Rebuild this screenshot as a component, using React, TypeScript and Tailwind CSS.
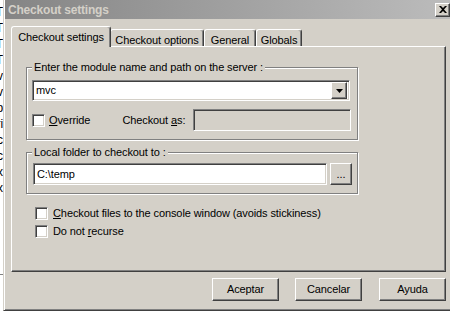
import React from "react";

const font = { fontFamily: '"Liberation Sans", Arial, sans-serif' };

// classic 3D bevels
const raised =
  "border-t border-l border-white border-r border-b border-r-[#404040] border-b-[#404040] shadow-[inset_-1px_-1px_0_#808080]";
const sunken =
  "border-t border-l border-[#808080] border-r border-b border-r-white border-b-white shadow-[inset_1px_1px_0_#404040,inset_-1px_-1px_0_#d4d0c8]";

function U({ children }: { children: React.ReactNode }) {
  return <span className="underline underline-offset-[1px]">{children}</span>;
}

function CheckBox() {
  return <div className={`w-[13px] h-[13px] bg-white shrink-0 ${sunken}`} />;
}

function Group({ label, className, children }: { label: string; className: string; children: React.ReactNode }) {
  return (
    <div
      className={`relative w-[332px] border border-[#808080] shadow-[1px_1px_0_white,inset_1px_1px_0_white] ${className}`}
    >
      <span className="absolute -top-[8px] left-[5px] bg-[#d4d0c8] px-[2px] leading-[14px]">{label}</span>
      {children}
    </div>
  );
}

function Tab({ label, active, w }: { label: string; active?: boolean; w: string }) {
  return (
    <div
      className={`${w} flex justify-center items-start pt-[2px] bg-[#d4d0c8] rounded-t-[3px] border-t border-l border-white border-r border-r-[#404040] shadow-[inset_-1px_0_0_#808080] ${
        active ? "h-[21px] relative z-10 -mx-[1px]" : "h-[17px] mb-[1px]"
      }`}
    >
      {label}
    </div>
  );
}

function Button({ label }: { label: string }) {
  return (
    <div className={`w-[67px] h-[23px] flex items-center justify-center bg-[#d4d0c8] ${raised}`}>{label}</div>
  );
}

export default function App() {
  return (
    <div
      className="w-[450px] h-[316px] bg-white overflow-hidden flex flex-col text-[11px] tracking-[-0.1px] text-black"
      style={font}
    >
      <div className="flex h-[311px]">
        {/* window behind */}
        <div className="w-[3px] overflow-hidden bg-white shrink-0 flex flex-col">
          <div className="w-[40px] -ml-[37px] text-right leading-[16px] pt-[4px] text-[12px]">
            {["sT", "cT", "aT", "nT", "sv", "uv", "dp", "ri", "mc", "oc", "ex", "x"].map((t, i) => (
              <div key={i}>{t}</div>
            ))}
          </div>
          <div className="mt-[78px] h-[1px] bg-[#808080]" />
        </div>
        {/* dialog */}
        <div className="w-[449px] shrink-0 bg-[#d4d0c8] border-l border-l-[#d4d0c8] border-b border-b-[#404040] shadow-[inset_1px_0_0_white,inset_0_-1px_0_#808080] flex flex-col">
          <div className="h-[19px] ml-[1px] flex items-center justify-between bg-gradient-to-r from-[#858585] to-[#bcbcbc] pl-[3px] pr-[2px]">
            <span className="text-[#d4d0c8] font-bold text-[12px] tracking-[-0.2px]">Checkout settings</span>
            <div className={`w-[15px] h-[14px] flex items-center justify-center bg-[#d4d0c8] ${raised}`}>
              <svg width="8" height="7" viewBox="0 0 8 7">
                <path d="M0 0h2l2 2 2-2h2L5 3.5 8 7H6L4 5 2 7H0l3-3.5z" fill="black" />
              </svg>
            </div>
          </div>

          <div className="pl-[7px] pt-[8px] flex flex-col">
            {/* tabs */}
            <div className="flex items-end h-[20px] -mb-[1px] pl-[1px]">
              <Tab label="Checkout settings" active w="w-[100px]" />
              <Tab label="Checkout options" w="w-[94px]" />
              <Tab label="General" w="w-[52px]" />
              <Tab label="Globals" w="w-[46px]" />
            </div>

            {/* panel */}
            <div className="w-[435px] h-[226px] border-t border-l border-white border-r border-b border-r-[#404040] border-b-[#404040] shadow-[inset_-1px_-1px_0_#808080] pl-[14px] pt-[20px] flex flex-col">
              <Group label="Enter the module name and path on the server :" className="h-[73px] pl-[5px] pt-[12px]">
                <div className={`w-[318px] h-[21px] bg-white flex items-center justify-between pl-[3px] pr-[2px] ${sunken}`}>
                  <span>mvc</span>
                  <div className={`w-[16px] h-[17px] flex items-center justify-center bg-[#d4d0c8] ${raised}`}>
                    <svg width="7" height="4" viewBox="0 0 7 4">
                      <path d="M0 0h7L3.5 4z" fill="black" />
                    </svg>
                  </div>
                </div>
                <div className="flex items-center mt-[8px] h-[22px]">
                  <CheckBox />
                  <span className="ml-[4px]">
                    <U>O</U>verride
                  </span>
                  <span className="ml-[32px]">
                    Checkout <U>a</U>s:
                  </span>
                  <div className={`ml-[8px] w-[158px] h-[22px] ${sunken}`} />
                </div>
              </Group>

              <Group label="Local folder to checkout to :" className="h-[42px] mt-[12px] pl-[6px] pt-[10px]">
                <div className="flex items-center">
                  <div className={`w-[294px] h-[22px] bg-white flex items-center pl-[3px] ${sunken}`}>C:\temp</div>
                  <div className={`ml-[3px] w-[22px] h-[22px] flex items-center justify-center bg-[#d4d0c8] ${raised}`}>
                    ...
                  </div>
                </div>
              </Group>

              <div className="flex items-center mt-[12px] ml-[9px] h-[14px]">
                <CheckBox />
                <span className="ml-[5px]">
                  <U>C</U>heckout files to the console window (avoids stickiness)
                </span>
              </div>
              <div className="flex items-center mt-[4px] ml-[9px] h-[14px]">
                <CheckBox />
                <span className="ml-[5px]">
                  Do not <U>r</U>ecurse
                </span>
              </div>
            </div>

            {/* buttons */}
            <div className="flex mt-[6px] pl-[201px]">
              <Button label="Aceptar" />
              <div className="ml-[16px]">
                <Button label="Cancelar" />
              </div>
              <div className="ml-[17px]">
                <Button label="Ayuda" />
              </div>
            </div>
          </div>
        </div>
      </div>
      <div className="flex-1 bg-white" />
    </div>
  );
}
